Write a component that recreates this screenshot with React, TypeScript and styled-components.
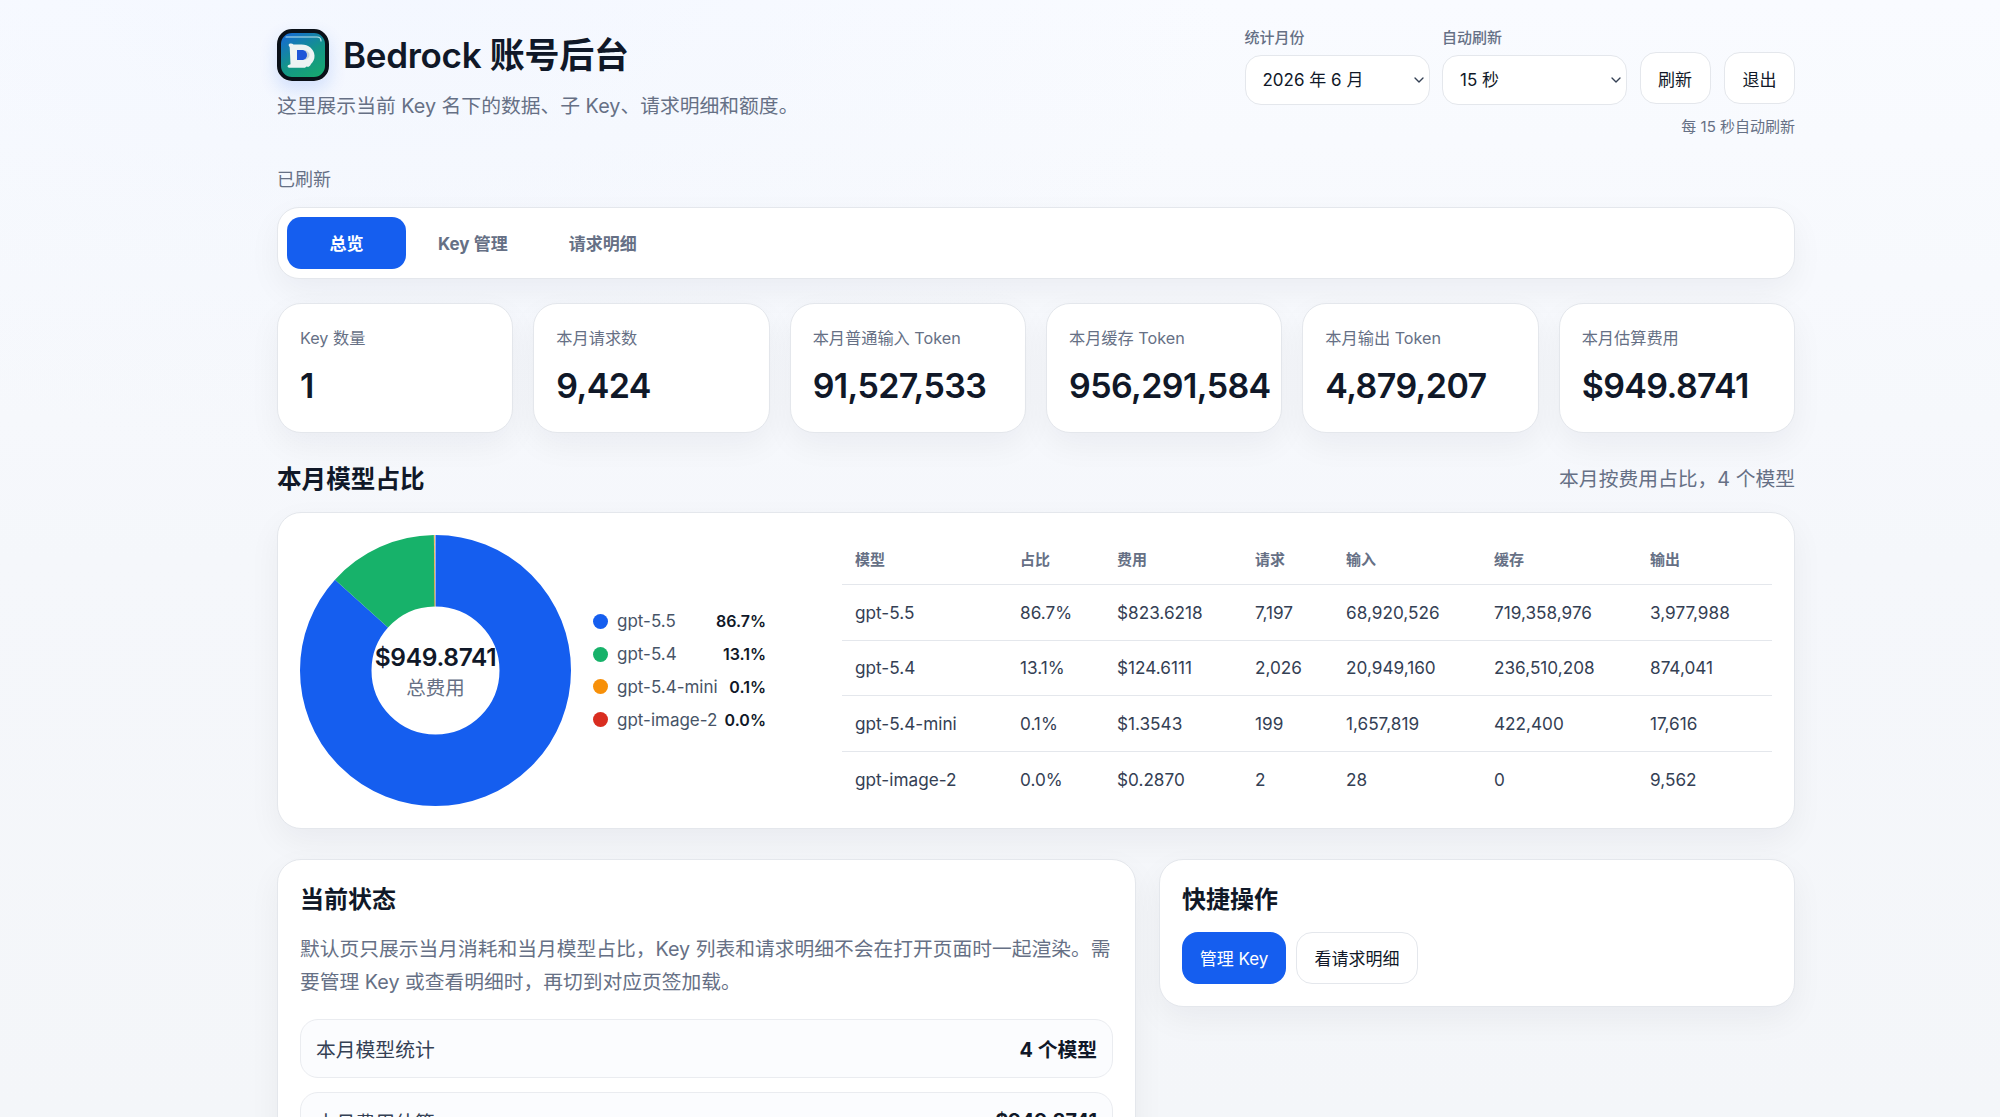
import styled, { createGlobalStyle } from "styled-components";
import { ChevronDown } from "lucide-react";

const FONT = `Inter, "Noto Sans CJK SC", "Noto Sans", sans-serif`;

const stats = [
    { label: "Key 数量", value: "1" },
    { label: "本月请求数", value: "9,424" },
    { label: "本月普通输入 Token", value: "91,527,533" },
    { label: "本月缓存 Token", value: "956,291,584" },
    { label: "本月输出 Token", value: "4,879,207" },
    { label: "本月估算费用", value: "$949.8741" },
];

const models = [
    { name: "gpt-5.5", share: 86.7, color: "#155eef", cost: "$823.6218", req: "7,197", input: "68,920,526", cache: "719,358,976", output: "3,977,988" },
    { name: "gpt-5.4", share: 13.1, color: "#17b26a", cost: "$124.6111", req: "2,026", input: "20,949,160", cache: "236,510,208", output: "874,041" },
    { name: "gpt-5.4-mini", share: 0.1, color: "#f79009", cost: "$1.3543", req: "199", input: "1,657,819", cache: "422,400", output: "17,616" },
    { name: "gpt-image-2", share: 0.0, color: "#d92d20", cost: "$0.2870", req: "2", input: "28", cache: "0", output: "9,562" },
];

const columns = [
    { title: "模型", width: 165 },
    { title: "占比", width: 97 },
    { title: "费用", width: 138 },
    { title: "请求", width: 91 },
    { title: "输入", width: 148 },
    { title: "缓存", width: 156 },
    { title: "输出", width: 135 },
];

const Logo = () => (
    <svg width="52" height="52" viewBox="0 0 52 52">
        <defs>
            <linearGradient id="logoFill" x1="0.15" y1="0" x2="0.75" y2="1">
                <stop offset="0" stopColor="#1668d8" />
                <stop offset="0.55" stopColor="#149489" />
                <stop offset="1" stopColor="#16a86f" />
            </linearGradient>
        </defs>
        <rect x="2" y="2" width="48" height="48" rx="13" fill="url(#logoFill)" stroke="#0a1018" strokeWidth="4" />
        <path d="M9 8h31c2.600 0 4 1.600 4 4" fill="none" stroke="#bfe6ee" strokeWidth="1.200" strokeLinecap="round" />
        <path d="M12 15c2-.8 3.400-.4 4.500.6h8c7 0 12.500 4.500 13 10.900.3 3.800-1.700 6.700-3.500 8.500-1 2.300-2.500 3.300-4.500 2.600l-1.500 1.200H12.500c-1.600.1-2.500-1.200-1.500-2.500l2.500-1-.8-17.300c-1-.8-1.400-2-.7-3z" fill="#eef3f3" />
        <path d="M20 21h5c3.200 0 5.500 2.200 5.500 5s-2.300 5-5.500 5h-5z" fill="#1d55d8" />
        <path d="M27.500 21c3 .8 5 2.600 5 5s-2 4.200-5 5c1.500-1.400 2.500-3 2.500-5s-1-3.600-2.500-5z" fill="#c9d4d6" />
    </svg>
);

const App = () => {
    return (
        <Page>
            <GlobalStyle />
            <Header>
                <div>
                    <TitleRow>
                        <LogoBox><Logo /></LogoBox>
                        <Title>Bedrock 账号后台</Title>
                    </TitleRow>
                    <Subtitle>这里展示当前 Key 名下的数据、子 Key、请求明细和额度。</Subtitle>
                </div>
                <HeaderRight>
                    <Controls>
                        <Field>
                            <FieldLabel>统计月份</FieldLabel>
                            <SelectBox>
                                <Select defaultValue="2026-06">
                                    <option value="2026-06">2026 年 6 月</option>
                                </Select>
                                <SelectArrow><ChevronDown size={16} strokeWidth={2} /></SelectArrow>
                            </SelectBox>
                        </Field>
                        <Field>
                            <FieldLabel>自动刷新</FieldLabel>
                            <SelectBox>
                                <Select defaultValue="15">
                                    <option value="15">15 秒</option>
                                </Select>
                                <SelectArrow><ChevronDown size={16} strokeWidth={2} /></SelectArrow>
                            </SelectBox>
                        </Field>
                        <HeaderButton>刷新</HeaderButton>
                        <HeaderButton>退出</HeaderButton>
                    </Controls>
                    <RefreshHint>每 15 秒自动刷新</RefreshHint>
                </HeaderRight>
            </Header>

            <StatusLine>已刷新</StatusLine>

            <Tabs>
                <Tab $active>总览</Tab>
                <Tab>Key 管理</Tab>
                <Tab>请求明细</Tab>
            </Tabs>

            <StatGrid>
                {stats.map((item) => (
                    <StatCard key={item.label}>
                        <StatLabel>{item.label}</StatLabel>
                        <StatValue>{item.value}</StatValue>
                    </StatCard>
                ))}
            </StatGrid>

            <SectionHead>
                <SectionTitle>本月模型占比</SectionTitle>
                <SectionNote>本月按费用占比，4 个模型</SectionNote>
            </SectionHead>

            <ModelPanel>
                <ChartArea>
                    <Donut>
                        <svg width="271" height="271" viewBox="0 0 271 271">
                            <g transform="rotate(-90 135.500 135.500)" fill="none" strokeWidth="71.500">
                                {models.map((item, index) => {
                                    const before = models.slice(0, index).reduce((sum, m) => sum + m.share, 0);
                                    return (
                                        <circle
                                            key={item.name}
                                            cx="135.500"
                                            cy="135.500"
                                            r="99.750"
                                            pathLength={100}
                                            stroke={item.color}
                                            strokeDasharray={`${item.share} ${100 - item.share}`}
                                            strokeDashoffset={-before}
                                        />
                                    );
                                })}
                            </g>
                        </svg>
                        <DonutCenter>
                            <DonutValue>$949.8741</DonutValue>
                            <DonutLabel>总费用</DonutLabel>
                        </DonutCenter>
                    </Donut>
                    <Legend>
                        {models.map((item) => (
                            <LegendRow key={item.name}>
                                <LegendDot $color={item.color} />
                                <LegendName>{item.name}</LegendName>
                                <LegendShare>{item.share.toFixed(1)}%</LegendShare>
                            </LegendRow>
                        ))}
                    </Legend>
                </ChartArea>
                <ModelTable>
                    <colgroup>
                        {columns.map((col) => <TableCol key={col.title} $width={col.width} />)}
                    </colgroup>
                    <thead>
                        <tr>
                            {columns.map((col) => <Th key={col.title}>{col.title}</Th>)}
                        </tr>
                    </thead>
                    <tbody>
                        {models.map((item) => (
                            <tr key={item.name}>
                                <Td>{item.name}</Td>
                                <Td>{item.share.toFixed(1)}%</Td>
                                <Td>{item.cost}</Td>
                                <Td>{item.req}</Td>
                                <Td>{item.input}</Td>
                                <Td>{item.cache}</Td>
                                <Td>{item.output}</Td>
                            </tr>
                        ))}
                    </tbody>
                </ModelTable>
            </ModelPanel>

            <BottomGrid>
                <BottomCard>
                    <CardTitle>当前状态</CardTitle>
                    <Paragraph>默认页只展示当月消耗和当月模型占比，Key 列表和请求明细不会在打开页面时一起渲染。需要管理 Key 或查看明细时，再切到对应页签加载。</Paragraph>
                    <InfoList>
                        <InfoRow>
                            <span>本月模型统计</span>
                            <InfoValue>4 个模型</InfoValue>
                        </InfoRow>
                        <InfoRow>
                            <span>本月费用估算</span>
                            <InfoValue>$949.8741</InfoValue>
                        </InfoRow>
                    </InfoList>
                </BottomCard>
                <BottomCard>
                    <CardTitle>快捷操作</CardTitle>
                    <ActionRow>
                        <PrimaryButton>管理 Key</PrimaryButton>
                        <GhostButton>看请求明细</GhostButton>
                    </ActionRow>
                </BottomCard>
            </BottomGrid>
        </Page>
    );
};

const GlobalStyle = createGlobalStyle`
    html, body {
        margin: 0;
        height: 1117px;
        overflow: hidden;
    }
    body {
        font-family: ${FONT};
        color: #101828;
        background: #f5f7fa;
    }
    * {
        box-sizing: border-box;
    }
`;

const Page = styled.div`
    height: 1117px;
    overflow: hidden;
    padding: 28px 205px 0 277px;
    background:
        radial-gradient(1100px 620px at 20% 0%, rgba(236, 242, 255, 0.4), transparent 75%),
        linear-gradient(180deg, #f9fbff 0%, #f5f7fb 50%, #f4f6f9 100%);
`;

/**************** HEADER *************************/
const Header = styled.div`
    display: flex;
    justify-content: space-between;
    align-items: flex-start;
`;

const TitleRow = styled.div`
    display: flex;
    align-items: center;
    gap: 14px;
`;

const LogoBox = styled.div`
    width: 52px;
    height: 52px;
    border-radius: 14px;
    box-shadow: 0 8px 18px rgba(21, 94, 239, 0.16);
    svg {
        display: block;
    }
`;

const Title = styled.h1`
    margin: 0;
    font-size: 35px;
    line-height: 54px;
    font-weight: 600;
    letter-spacing: -0.3px;
`;

const Subtitle = styled.div`
    margin-top: 8px;
    font-size: 19.800px;
    line-height: 32px;
    color: #667085;
`;

const HeaderRight = styled.div`
    display: flex;
    flex-direction: column;
    align-items: flex-end;
`;

const Controls = styled.div`
    display: flex;
    align-items: flex-end;
    gap: 12.500px;
    padding-top: 1px;
`;

const Field = styled.div`
    display: flex;
    flex-direction: column;
    gap: 8px;
`;

const FieldLabel = styled.div`
    font-size: 15px;
    line-height: 18px;
    font-weight: 500;
    color: #667085;
`;

const SelectBox = styled.div`
    position: relative;
    width: 185px;
    height: 50px;
`;

const Select = styled.select`
    width: 100%;
    height: 100%;
    padding: 0 30px 0 17px;
    appearance: none;
    font-family: ${FONT};
    font-size: 17px;
    color: #101828;
    background: #fff;
    border: 1px solid #e4e7ec;
    border-radius: 16px;
`;

const SelectArrow = styled.span`
    position: absolute;
    right: 3px;
    top: 17px;
    display: flex;
    color: #344054;
    pointer-events: none;
`;

const GhostButton = styled.button`
    width: 122px;
    height: 52px;
    padding: 0;
    font-family: ${FONT};
    font-size: 17px;
    color: #101828;
    background: #fff;
    border: 1px solid #e4e7ec;
    border-radius: 16px;
`;

const HeaderButton = styled(GhostButton)`
    width: 71px;
    margin-bottom: 1px;
    & + & {
        margin-left: 1px;
    }
`;

const PrimaryButton = styled.button`
    width: 104px;
    height: 52px;
    padding: 0;
    font-family: ${FONT};
    font-size: 17px;
    color: #fff;
    background: #155eef;
    border: none;
    border-radius: 16px;
`;

const RefreshHint = styled.div`
    margin-top: 11px;
    font-size: 15px;
    line-height: 22px;
    color: #667085;
`;

const StatusLine = styled.div`
    margin-top: 28.500px;
    font-size: 18px;
    line-height: 26px;
    color: #667085;
`;

/**************** TABS *************************/
const Tabs = styled.div`
    display: flex;
    gap: 3px;
    height: 72px;
    margin-top: 14px;
    padding: 9px;
    background: #fff;
    border: 1px solid #e4e7ec;
    border-radius: 22px;
    box-shadow: 0 12px 32px rgba(16, 24, 40, 0.05);
`;

const Tab = styled.div<{ $active?: boolean }>`
    display: flex;
    align-items: center;
    justify-content: center;
    width: ${(p) => (p.$active ? "119px" : "auto")};
    padding: ${(p) => (p.$active ? "0" : "0 29px")};
    font-size: 17px;
    font-weight: 700;
    color: ${(p) => (p.$active ? "#fff" : "#667085")};
    background: ${(p) => (p.$active ? "#155eef" : "transparent")};
    border-radius: 14px;
`;

/**************** STATS *************************/
const StatGrid = styled.div`
    display: grid;
    grid-template-columns: repeat(6, minmax(0, 1fr));
    gap: 20px;
    margin-top: 24px;
`;

const StatCard = styled.div`
    height: 130px;
    padding: 23px 0 0 22px;
    background: #fff;
    border: 1px solid #e4e7ec;
    border-radius: 24px;
    box-shadow: 0 12px 32px rgba(16, 24, 40, 0.05);
`;

const StatLabel = styled.div`
    font-size: 16.200px;
    line-height: 22px;
    color: #667085;
`;

const StatValue = styled.div`
    margin-top: 15px;
    font-size: 34px;
    line-height: 44px;
    font-weight: 600;
    letter-spacing: -0.6px;
    white-space: nowrap;
`;

/**************** MODEL SHARE *************************/
const SectionHead = styled.div`
    display: flex;
    justify-content: space-between;
    align-items: center;
    height: 38px;
    margin-top: 25.500px;
`;

const SectionTitle = styled.h2`
    margin: 0;
    font-size: 24.600px;
    font-weight: 700;
`;

const SectionNote = styled.div`
    font-size: 19.800px;
    color: #667085;
`;

const ModelPanel = styled.div`
    display: flex;
    align-items: center;
    height: 317px;
    margin-top: 16px;
    padding: 0 22px 2px;
    background: #fff;
    border: 1px solid #e4e7ec;
    border-radius: 24px;
    box-shadow: 0 12px 32px rgba(16, 24, 40, 0.05);
`;

const ChartArea = styled.div`
    display: flex;
    align-items: center;
    gap: 22px;
    width: 542px;
    flex: none;
    margin-top: 2px;
`;

const Donut = styled.div`
    position: relative;
    width: 271px;
    height: 271px;
    svg {
        display: block;
    }
`;

const DonutCenter = styled.div`
    position: absolute;
    inset: 0;
    display: flex;
    flex-direction: column;
    align-items: center;
    justify-content: center;
`;

const DonutValue = styled.div`
    font-size: 24.500px;
    line-height: 34px;
    font-weight: 600;
    letter-spacing: -0.3px;
`;

const DonutLabel = styled.div`
    margin-top: 1px;
    font-size: 19.500px;
    line-height: 27px;
    color: #667085;
`;

const Legend = styled.div`
    display: flex;
    flex-direction: column;
    width: 173px;
`;

const LegendRow = styled.div`
    display: flex;
    align-items: center;
    height: 32.700px;
    font-size: 17px;
`;

const LegendDot = styled.span<{ $color: string }>`
    flex: none;
    width: 15px;
    height: 15px;
    margin-right: 9px;
    border-radius: 50%;
    background: ${(p) => p.$color};
`;

const LegendName = styled.span`
    color: #475467;
    white-space: nowrap;
`;

const LegendShare = styled.span`
    margin-left: auto;
    font-size: 16px;
    font-weight: 600;
`;

const ModelTable = styled.table`
    width: 930px;
    flex: none;
    table-layout: fixed;
    border-collapse: collapse;
`;

const TableCol = styled.col<{ $width: number }>`
    width: ${(p) => p.$width}px;
`;

const Th = styled.th`
    height: 52px;
    padding: 0 13px;
    text-align: left;
    font-size: 15px;
    font-weight: 700;
    color: #667085;
    border-bottom: 1px solid #e4e7ec;
`;

const Td = styled.td`
    height: 55.500px;
    padding: 0 13px;
    font-size: 17.200px;
    color: #344054;
    border-bottom: 1px solid #e4e7ec;
    white-space: nowrap;
    tr:last-child & {
        border-bottom: none;
    }
`;

/**************** BOTTOM CARDS *************************/
const BottomGrid = styled.div`
    display: grid;
    grid-template-columns: 859px 636px;
    gap: 23px;
    align-items: start;
    margin-top: 29.500px;
`;

const BottomCard = styled.div`
    padding: 23px 22px 22px;
    background: #fff;
    border: 1px solid #e4e7ec;
    border-radius: 24px;
    box-shadow: 0 12px 32px rgba(16, 24, 40, 0.05);
`;

const CardTitle = styled.h3`
    margin: 0;
    font-size: 24px;
    line-height: 34px;
    font-weight: 700;
`;

const Paragraph = styled.p`
    margin: 16px 0 0;
    font-size: 19.750px;
    line-height: 33px;
    color: #667085;
`;

const InfoList = styled.div`
    display: flex;
    flex-direction: column;
    gap: 14px;
    margin-top: 20px;
`;

const InfoRow = styled.div`
    display: flex;
    justify-content: space-between;
    align-items: center;
    height: 59px;
    padding: 0 15px;
    font-size: 19.800px;
    color: #344054;
    background: #fbfcfe;
    border: 1px solid #eaecf0;
    border-radius: 18px;
`;

const InfoValue = styled.span`
    font-weight: 700;
    color: #101828;
`;

const ActionRow = styled.div`
    display: flex;
    gap: 10px;
    margin-top: 15px;
`;

export default App;
